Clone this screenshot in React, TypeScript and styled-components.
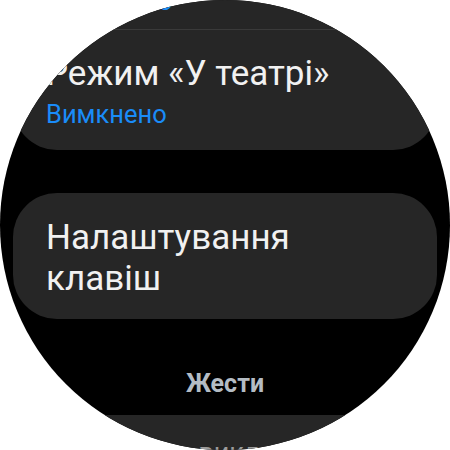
import styled, { createGlobalStyle } from 'styled-components'

const GlobalStyle = createGlobalStyle`
	html, body {
		margin: 0;
		padding: 0;
		background: #ffffff;
	}
`

const Watch = styled.div`
	width: 450px;
	height: 450px;
	border-radius: 50%;
	overflow: hidden;
	background: #000000;
	font-family: Roboto, 'Noto Sans', sans-serif;
`

// the list is scrolled, so the first card starts above the screen
const List = styled.div`
	display: flex;
	flex-direction: column;
	margin-top: -80px;
	padding: 0 13px;
`

const Card = styled.div<{ $gap?: number }>`
	background: #262626;
	border-radius: 44px;
	margin-bottom: ${(p) => p.$gap ?? 0}px;
`

const Item = styled.div<{ $pt: number; $pb: number }>`
	padding: ${(p) => p.$pt}px 30px ${(p) => p.$pb}px 33px;
`

const Title = styled.div<{ $size: number; $lh: number; $color?: string }>`
	font-size: ${(p) => p.$size}px;
	line-height: ${(p) => p.$lh}px;
	color: ${(p) => p.$color ?? '#f1f1f1'};
	white-space: nowrap;
`

const Sub = styled.div`
	margin-top: 5px;
	font-size: 25.5px;
	line-height: 30px;
	color: #1a8cf8;
	white-space: nowrap;
`

const Divider = styled.div`
	height: 1px;
	margin: 0 30px;
	background: #3a3a3a;
`

const Header = styled.div`
	padding: 50px 0 16px;
	text-align: center;
	font-size: 25px;
	line-height: 30px;
	font-weight: 700;
	color: #b4bcc4;
`

export default function App() {
	return (
		<>
			<GlobalStyle />
			<Watch>
				<List>
					<Card $gap={43}>
						<Item $pt={21} $pb={13}>
							<Title $size={34} $lh={40}>
								Підсвічування
							</Title>
							<Sub>Увімкнено</Sub>
						</Item>
						<Divider />
						<Item $pt={24} $pb={21}>
							<Title $size={35} $lh={40}>
								Режим «У театрі»
							</Title>
							<Sub>Вимкнено</Sub>
						</Item>
					</Card>
					<Card>
						<Item $pt={24} $pb={20}>
							<Title $size={35} $lh={41}>
								Налаштування
								<br />
								клавіш
							</Title>
						</Item>
					</Card>
					<Header>Жести</Header>
					<Card>
						<Item $pt={21} $pb={20}>
							<Title $size={27} $lh={34} $color='#9c9c9c'>
								Перейти до виклику
							</Title>
						</Item>
					</Card>
				</List>
			</Watch>
		</>
	)
}
